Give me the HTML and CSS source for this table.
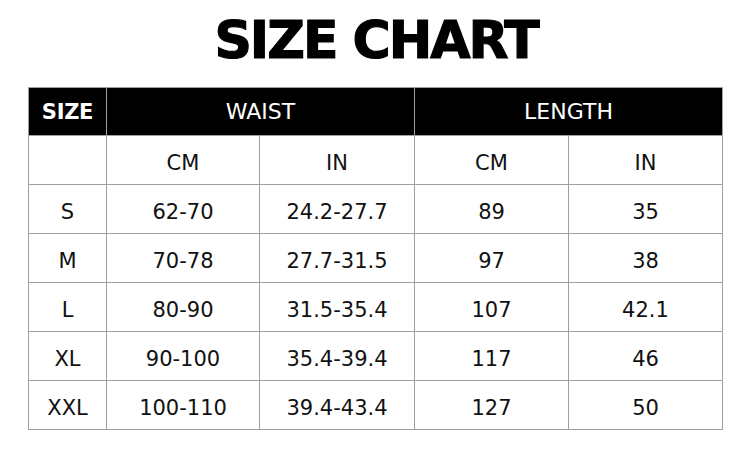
FILE: index.html
```html
<!DOCTYPE html>
<html>
<head>
<meta charset="utf-8">
<link rel="stylesheet" href="styles.css">
</head>
<body>
<h1 class="title">SIZE CHART</h1>
<div class="chart">
  <div class="cell head size">SIZE</div>
  <div class="cell head span2">WAIST</div>
  <div class="cell head span2">LENGTH</div>

  <div class="cell"></div>
  <div class="cell">CM</div>
  <div class="cell">IN</div>
  <div class="cell">CM</div>
  <div class="cell">IN</div>

  <div class="cell">S</div>
  <div class="cell">62-70</div>
  <div class="cell">24.2-27.7</div>
  <div class="cell">89</div>
  <div class="cell">35</div>

  <div class="cell">M</div>
  <div class="cell">70-78</div>
  <div class="cell">27.7-31.5</div>
  <div class="cell">97</div>
  <div class="cell">38</div>

  <div class="cell">L</div>
  <div class="cell">80-90</div>
  <div class="cell">31.5-35.4</div>
  <div class="cell">107</div>
  <div class="cell">42.1</div>

  <div class="cell">XL</div>
  <div class="cell">90-100</div>
  <div class="cell">35.4-39.4</div>
  <div class="cell">117</div>
  <div class="cell">46</div>

  <div class="cell">XXL</div>
  <div class="cell">100-110</div>
  <div class="cell">39.4-43.4</div>
  <div class="cell">127</div>
  <div class="cell">50</div>
</div>
</body>
</html>
```
FILE: styles.css
```css
html, body {
  margin: 0;
  padding: 0;
  background: #ffffff;
}

body {
  font-family: "DejaVu Sans", Verdana, sans-serif;
  color: #111111;
}

.title {
  margin: 0 0 17px 0;
  padding-top: 10px;
  font-size: 52px;
  line-height: 60px;
  font-weight: bold;
  letter-spacing: -2px;
  text-align: center;
  color: #000000;
  -webkit-text-stroke: 1.2px #000000;
  padding-left: 2px;
}

.chart {
  margin-left: 28px;
  width: 693px;
  display: grid;
  grid-template-columns: 77px 152px 154px 153px 153px;
  grid-template-rows: 47px repeat(6, 48px);
  gap: 1px;
  padding: 1px;
  background: #a0a0a0;
}

.cell {
  background: #ffffff;
  display: flex;
  align-items: center;
  justify-content: center;
  font-size: 21px;
  padding-top: 6px;
  box-sizing: border-box;
}

.head {
  background: #000000;
  color: #ffffff;
  font-size: 22px;
  padding-top: 0;
}

.size {
  font-weight: bold;
  font-size: 21px;
  letter-spacing: -0.3px;
}

.span2 {
  grid-column: span 2;
}
```
